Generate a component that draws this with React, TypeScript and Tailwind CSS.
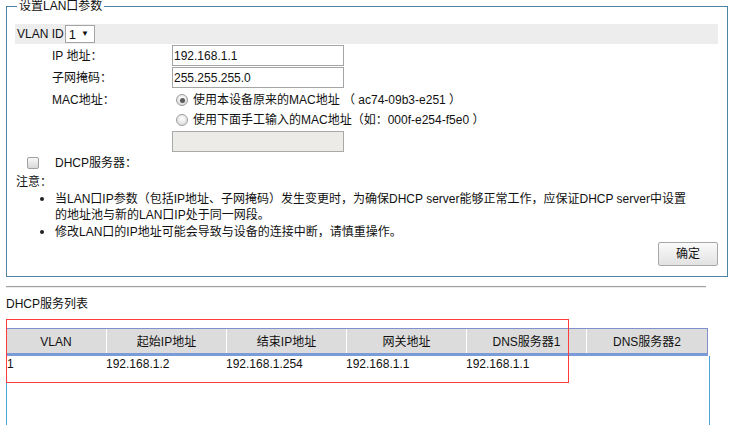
import React from 'react'

const font = 'font-["Liberation_Sans","Noto_Sans_CJK_SC",sans-serif]'

const Radio = ({ checked }: { checked?: boolean }) => (
  <span className="w-[12px] h-[12px] rounded-full border border-[#9c9c9c] bg-[radial-gradient(circle_at_50%_35%,#ffffff,#d2d2d2)] flex items-center justify-center shrink-0">
    {checked && <span className="w-[5px] h-[5px] rounded-full bg-[#5a5a5a]" />}
  </span>
)

const columns = [
  { label: 'VLAN', w: 'w-[100px]' },
  { label: '起始IP地址', w: 'w-[120px]' },
  { label: '结束IP地址', w: 'w-[120px]' },
  { label: '网关地址', w: 'w-[120px]' },
  { label: 'DNS服务器1', w: 'w-[120px]' },
  { label: 'DNS服务器2', w: 'w-[121px]' }
]

const rows = [['1', '192.168.1.2', '192.168.1.254', '192.168.1.1', '192.168.1.1', '']]

export default function App() {
  return (
    <div className={`relative w-[754px] h-[425px] overflow-hidden bg-white text-[12px] text-[#111] ${font}`}>
      <fieldset className="ml-[6px] w-[722px] border border-[#4f83a4] pl-[8px] pr-[9px] pb-[10px]">
        <legend className="ml-[2px] px-[2px] leading-[12px] text-[12px]">设置LAN口参数</legend>

        <div className="mt-[12px] h-[20px] bg-[#ededed] flex items-center pl-[2px]">
          <span>VLAN ID</span>
          <div className="ml-[1px] w-[30px] h-[18px] border border-[#a5a5a5] bg-white flex items-center pl-[3px] gap-[5px]">
            <span className="text-[13px] leading-none">1</span>
            <span className="text-[8px] leading-none">▼</span>
          </div>
        </div>

        <div className="mt-[1px] h-[21px] flex items-center">
          <span className="w-[157px] pl-[37px]">IP 地址：</span>
          <div className="w-[172px] h-[21px] border border-[#a5a5a5] flex items-center pl-[1px]">192.168.1.1</div>
        </div>
        <div className="mt-[1px] h-[21px] flex items-center">
          <span className="w-[157px] pl-[37px]">子网掩码：</span>
          <div className="w-[172px] h-[21px] border border-[#a5a5a5] flex items-center pl-[1px]">255.255.255.0</div>
        </div>

        <div className="mt-[2px] flex">
          <span className="w-[157px] pl-[37px] h-[20px] flex items-center">MAC地址：</span>
          <div className="flex flex-col">
            <div className="h-[20px] flex items-center gap-[5px] pl-[4px]">
              <Radio checked />
              <span>使用本设备原来的MAC地址 （ ac74-09b3-e251 ）</span>
            </div>
            <div className="h-[20px] flex items-center gap-[5px] pl-[4px]">
              <Radio />
              <span>使用下面手工输入的MAC地址（如：000f-e254-f5e0 ）</span>
            </div>
            <div className="mt-[1px] w-[172px] h-[21px] border border-[#a9a9a9] bg-[#ecebe7]" />
          </div>
        </div>

        <div className="mt-[1px] h-[20px] flex items-center pl-[12px]">
          <span className="w-[12px] h-[12px] rounded-[2px] border border-[#a0a0a0] bg-[linear-gradient(#f8f8f8,#d8d8d8)]" />
          <span className="ml-[16px]">DHCP服务器：</span>
        </div>

        <div className="h-[18px] flex items-center pl-[1px]">注意：</div>
        <div className="leading-[16px]">
          <div className="flex">
            <div className="w-[40px] h-[16px] flex items-center pl-[25px]">
              <span className="w-[4px] h-[4px] rounded-full bg-[#222]" />
            </div>
            <div className="whitespace-nowrap">
              当LAN口IP参数（包括IP地址、子网掩码）发生变更时，为确保DHCP server能够正常工作，应保证DHCP server中设置
              <br />
              的地址池与新的LAN口IP处于同一网段。
            </div>
          </div>
          <div className="mt-[1px] flex">
            <div className="w-[40px] h-[16px] flex items-center pl-[25px]">
              <span className="w-[4px] h-[4px] rounded-full bg-[#222]" />
            </div>
            <div className="whitespace-nowrap">修改LAN口的IP地址可能会导致与设备的连接中断，请慎重操作。</div>
          </div>
        </div>

        <div className="mt-[2px] flex justify-end">
          <button className="w-[60px] h-[24px] border border-[#a8a8a8] rounded-[2px] bg-[linear-gradient(#fafafa,#e2e2e2)] text-[12px]">
            确定
          </button>
        </div>
      </fieldset>

      <div className="mt-[9px] ml-[6px] w-[700px] border-t border-[#a0a0a0] border-b border-b-[#ececec]" />

      <div className="mt-[8px] ml-[6px] leading-[16px]">DHCP服务列表</div>

      <div className="mt-[16px] ml-[6px] w-[704px]">
        <div className="w-[702px] flex bg-[#dcdcdc] border-t border-r border-[#8190cc] border-b-[3px] border-b-[#7a9ad8]">
          {columns.map((c, i) => (
            <div
              key={c.label}
              className={`${c.w} h-[24px] flex items-center justify-center pt-[2px] ${i > 0 ? 'border-l border-white' : ''}`}
            >
              {c.label}
            </div>
          ))}
        </div>
        <div className="h-[80px] border-l border-r border-[#4da3db]">
          {rows.map((r, ri) => (
            <div key={ri} className="flex h-[16px] items-center">
              {r.map((cell, ci) => (
                <div key={ci} className={`${ci === 0 ? 'w-[99px]' : 'w-[120px]'} whitespace-nowrap`}>
                  {cell}
                </div>
              ))}
            </div>
          ))}
        </div>
      </div>

      <div className="absolute left-[6px] top-[319px] w-[563px] h-[64px] border border-[#ff3b3b]" />
    </div>
  )
}
